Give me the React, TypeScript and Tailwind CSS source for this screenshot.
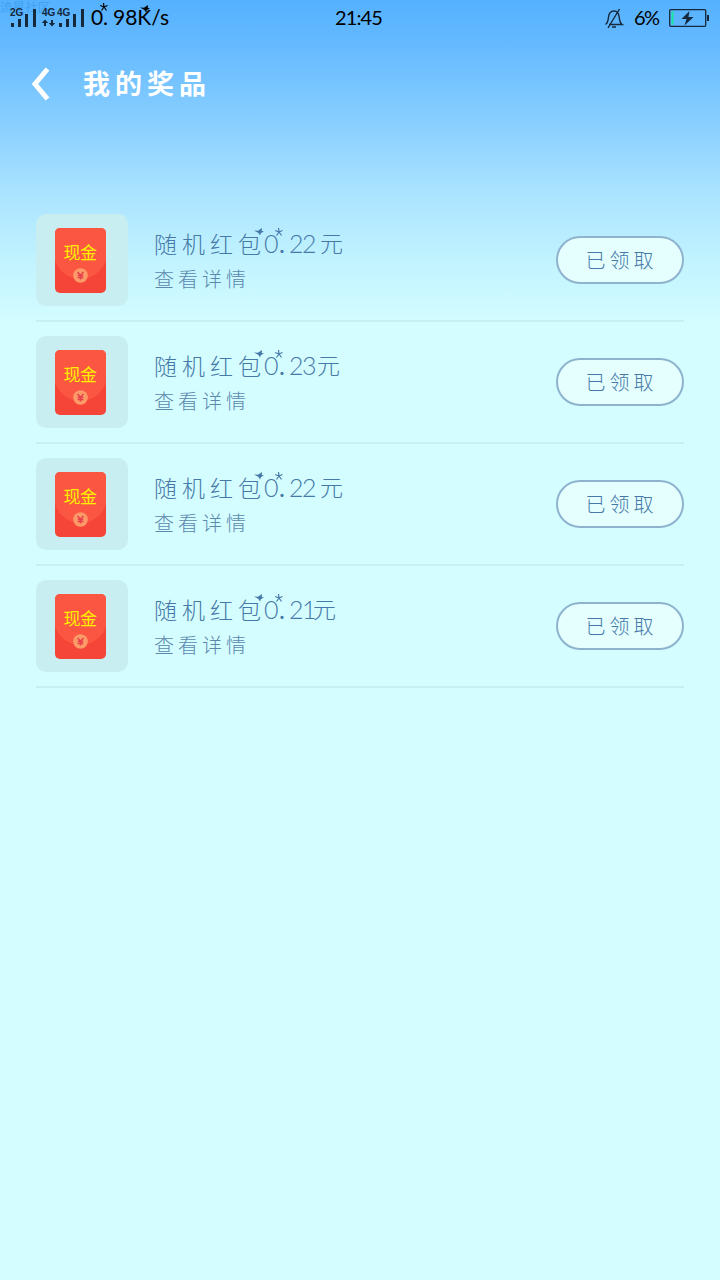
import { ReactNode } from 'react';

const prizes = [
  { id: 1, cents: '22', width: 'w-[31px]' },
  { id: 2, cents: '23', width: 'w-[28px]' },
  { id: 3, cents: '22', width: 'w-[31px]' },
  { id: 4, cents: '21', width: 'w-[24px]' },
];

function Bars() {
  return (
    <svg width="26" height="18" viewBox="0 0 26 18" fill="#15283c">
      <rect x="0" y="14" width="3" height="4" />
      <rect x="7" y="10" width="3" height="8" />
      <rect x="14" y="5" width="3" height="13" />
      <rect x="22" y="0" width="3" height="18" />
    </svg>
  );
}

function NetLabel({ className, children }: { className: string; children: ReactNode }) {
  return (
    <span className={`absolute font-['Liberation_Sans'] text-[10px] leading-[10px] font-bold text-[#15283c] ${className}`}>
      {children}
    </span>
  );
}

function StatusBar() {
  return (
    <div className="relative flex h-9 items-center justify-between text-black">
      <span className="absolute left-0 top-[-3px] text-[12.5px] leading-[19px] text-[#3fa2f3]">流星社区</span>
      <div className="flex items-center pl-[11px]">
        <div className="relative flex h-[18px] items-end">
          <Bars />
          <svg className="ml-[5px]" width="13" height="18" viewBox="0 0 13 18" fill="#15283c">
            <path d="M3 10.500l3.200 3.500H4v3H2v-3H-.2zM10 17.500L6.800 14H9v-3h2v3h2.200z" />
          </svg>
          <div className="ml-[4px]">
            <Bars />
          </div>
          <NetLabel className="left-[-1px] top-[-1px]">2G</NetLabel>
          <NetLabel className="left-[31px] top-[-1px]">4G</NetLabel>
          <NetLabel className="left-[46px] top-[-1px]">4G</NetLabel>
        </div>
        <div className="relative bottom-px ml-[6px] flex font-['Lato'] text-[21px] leading-6">
          <span className="w-[12px]">0</span>
          <span className="w-[10px]">.</span>
          <span className="w-[57px]">98K/s</span>
          <Star className="left-[9px] top-[-2px]" />
          <Butterfly className="left-[49px] top-0" />
        </div>
      </div>
      <span className="absolute left-[335px] top-[5px] font-['Lato'] text-[20px] leading-6 tracking-[-0.9px]">21:45</span>
      <div className="flex items-center pr-[10px]">
        <svg className="mr-[2px]" width="21" height="22" viewBox="0 0 21 22" fill="none" stroke="#15283c" strokeWidth="1.4">
          <path d="M1.500 17.500c3-2 2.500-4 3-7.500C5 6 7 4 10 4s4.700 2 5.200 6c.5 3.500 0 5.500 3 7.500h-13M8 20h4" />
          <path d="M15.500 2L4 21" />
        </svg>
        <span className="relative bottom-px ml-[7px] w-[26px] font-['Lato'] text-[20px] leading-6 tracking-[-1.5px]">6%</span>
        <svg className="ml-[9px]" width="41" height="18" viewBox="0 0 41 18">
          <rect x="0.700" y="0.700" width="36" height="16.600" rx="1" fill="none" stroke="#15283c" strokeWidth="1.300" />
          <rect x="2.500" y="2.500" width="2" height="13" fill="#18e6a0" />
          <path d="M20.500 2L12.500 10h5L15.500 16.500 24.500 8h-5z" fill="#15283c" />
          <rect x="38" y="6" width="2" height="6" fill="#15283c" />
        </svg>
      </div>
    </div>
  );
}

function Star({ className }: { className: string }) {
  return (
    <svg className={`absolute ${className}`} width="8" height="8" viewBox="0 0 8 8" fill="none" stroke="currentColor" strokeWidth="1.2">
      <path d="M3.500 0l.5 4 3.500-1.500M4 4l2.500 3.500M4 4L1.500 7.500M4 4L.2 2.500" />
    </svg>
  );
}

function Butterfly({ className }: { className: string }) {
  return (
    <svg className={`absolute ${className}`} width="10" height="8" viewBox="0 0 10 8" fill="currentColor">
      <path d="M0 2.500l4 .2L8 0l-.2 3L10 3.500 7 5 6 7.500 4.500 5z" />
    </svg>
  );
}

function RedPacket() {
  return (
    <div className="flex size-[92px] items-center justify-center rounded-[10px] bg-[#c8eef1]">
      <div className="relative mr-[4px] h-[65px] w-[51px] overflow-hidden rounded-[5px] bg-[#f44538]">
        <div className="absolute left-[-1px] top-[-2px] h-[53px] w-[53px] rounded-full bg-[#fa5642]" />
        <div className="absolute left-0 top-0 h-[28px] w-full bg-[#fa5642]" />
        <span className="absolute left-[9px] top-[14px] text-[17px] leading-5 tracking-[-0.5px] whitespace-nowrap text-[#fff000]">
          现金
        </span>
        <svg className="absolute left-[18px] top-[40px]" width="15" height="15" viewBox="0 0 15 15">
          <circle cx="7.500" cy="7.500" r="7.300" fill="#fc9b68" />
          <path d="M4.500 4L7.500 7.300 10.500 4M7.500 7v4.500M4.700 7.500h5.600M4.700 9.500h5.600" fill="none" stroke="#e83f4c" strokeWidth="1.500" />
        </svg>
      </div>
    </div>
  );
}

function PrizeRow({ cents, width }: { cents: string; width: string }) {
  return (
    <div className="flex h-[122px] items-center border-b-2 border-[#c6f0f2]">
      <RedPacket />
      <div className="ml-[26px] flex flex-1 flex-col font-light">
        <div className="relative flex h-9 items-center text-[23px] leading-9 text-[#4679a8]">
          <span className="w-[110px] tracking-[5px] whitespace-nowrap">随机红包</span>
          <span className="w-[15px] font-['Lato'] text-[25px] font-light">0</span>
          <span className="w-[10px] font-['Lato'] text-[25px] font-normal">.</span>
          <span className={`${width} font-['Lato'] text-[25px] font-light tracking-[-1.5px]`}>{cents}</span>
          <span className="relative bottom-px">元</span>
          <Butterfly className="left-[100px] top-[3px]" />
          <Star className="left-[121px] top-[3px]" />
        </div>
        <span className="relative top-px text-[20px] leading-[34px] tracking-[4px] text-[#5c88ad]">查看详情</span>
      </div>
      <button className="h-12 w-32 rounded-full border-2 border-[#8eb3ce] bg-[#e5ffff] pl-[3px] text-[20px] leading-[42px] font-light tracking-[4px] text-[#4679a8]">
        已领取
      </button>
    </div>
  );
}

export default function App() {
  return (
    <div className="min-h-[1280px] w-full bg-[#d4fdff] bg-[linear-gradient(to_bottom,#55b1ff_0px,#67bbff_50px,#80caff_105px,#ade5ff_200px,#c1f3ff_260px,#d4fdff_325px)] font-['Noto_Sans_CJK_SC',sans-serif]">
      <StatusBar />
      <header className="flex h-24 items-center pl-[31px]">
        <svg width="20" height="36" viewBox="0 0 20 36" fill="none" stroke="#fff" strokeWidth="5">
          <path d="M16.500 3L4 18l12.500 15" />
        </svg>
        <h1 className="relative bottom-px ml-[32px] text-[27px] leading-9 font-bold tracking-[5px] text-white">我的奖品</h1>
      </header>
      <main className="mt-[68px] px-9">
        {prizes.map((prize) => (
          <PrizeRow key={prize.id} cents={prize.cents} width={prize.width} />
        ))}
      </main>
    </div>
  );
}
